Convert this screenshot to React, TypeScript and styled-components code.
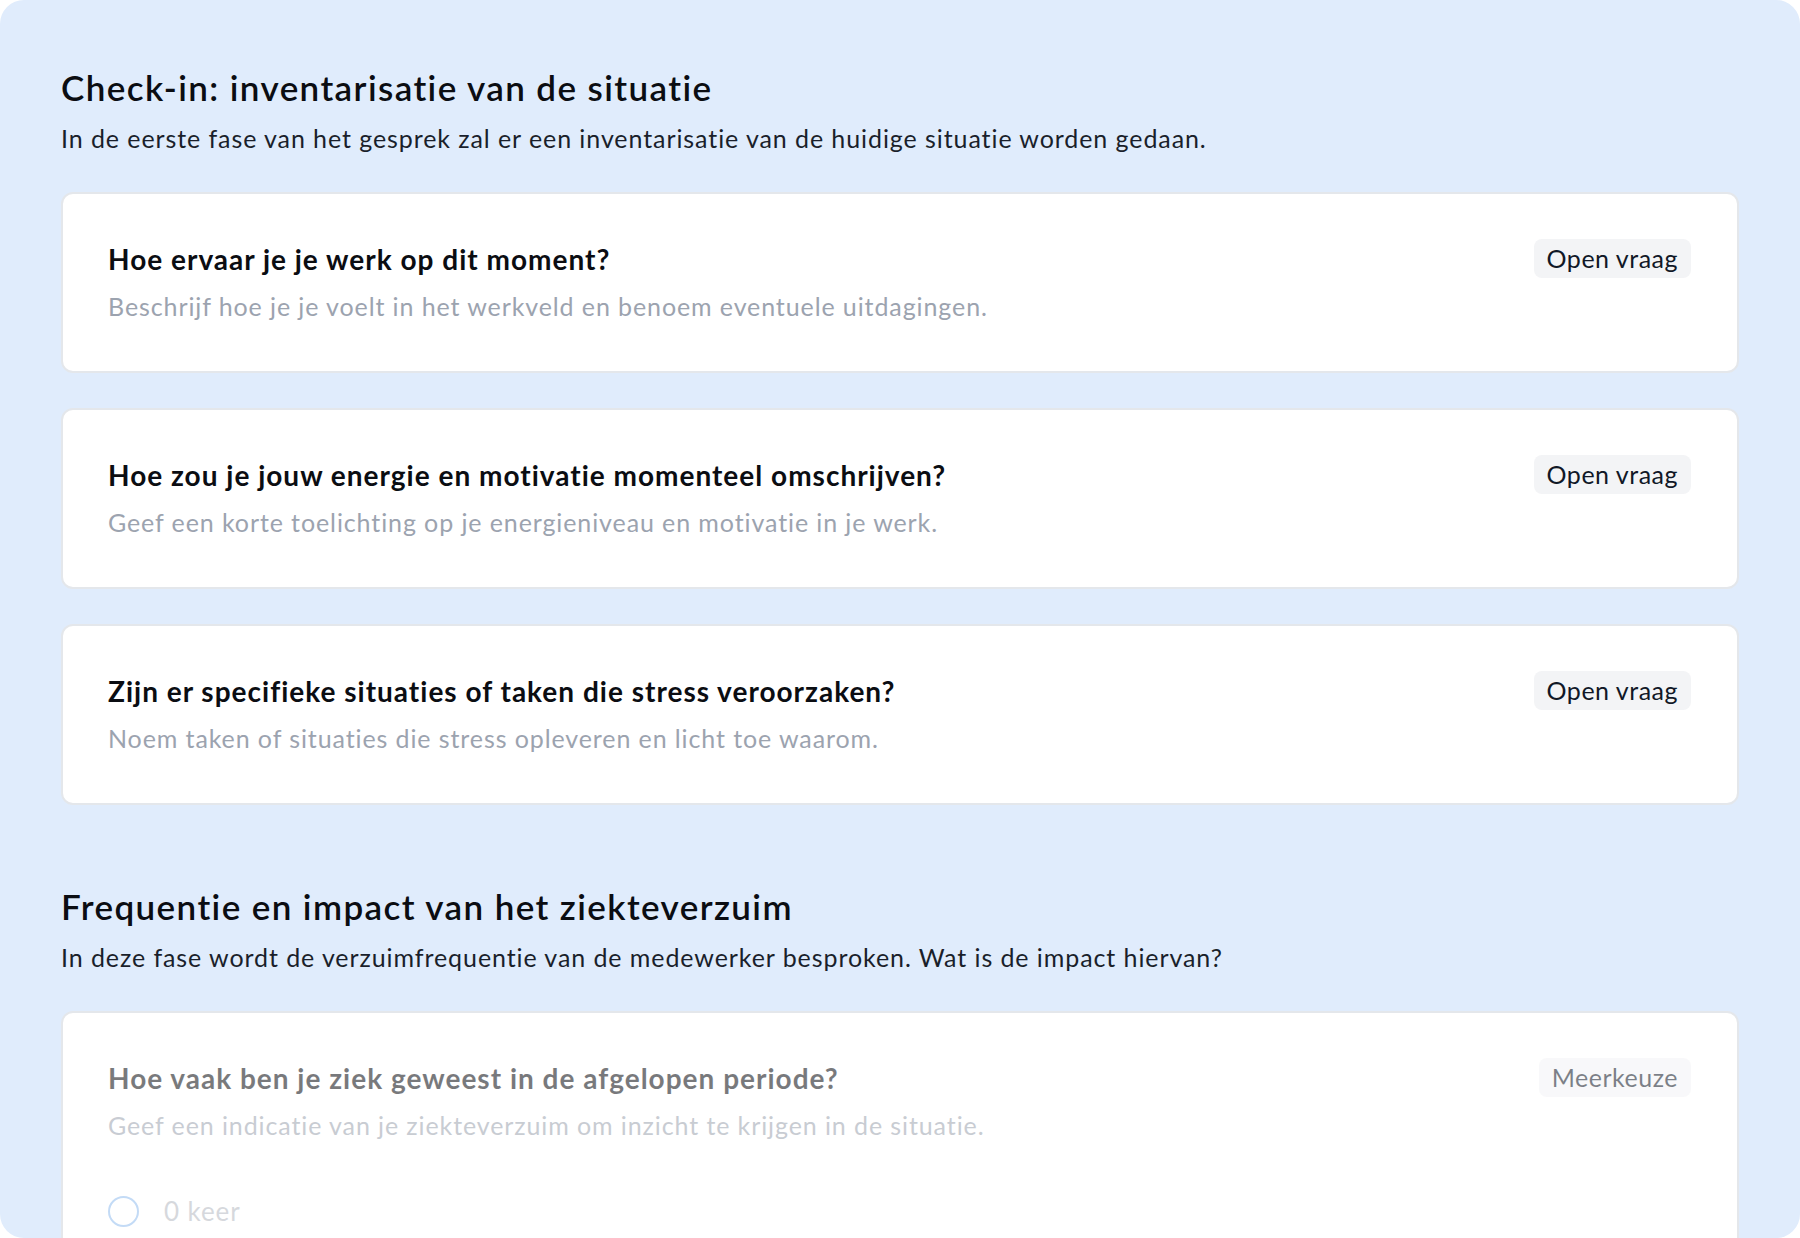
import React from 'react';
import styled, { createGlobalStyle } from 'styled-components';

const GlobalStyle = createGlobalStyle`
  html, body {
    margin: 0;
    padding: 0;
    background: #ffffff;
  }
  body {
    font-family: Lato, "Noto Sans", sans-serif;
    -webkit-font-smoothing: antialiased;
  }
`;

const Panel = styled.div`
  height: 1238px;
  box-sizing: border-box;
  background: #e0ecfc;
  border-radius: 24px;
  overflow: hidden;
  padding: 67px 61px 0;
  display: flex;
  flex-direction: column;
  gap: 81px;
`;

const Section = styled.section`
  display: flex;
  flex-direction: column;
`;

const Heading = styled.h2`
  margin: 0;
  font-size: 35px;
  line-height: 40px;
  font-weight: 600;
  letter-spacing: 1.4px;
  color: #0b0d12;
`;

const Intro = styled.p`
  margin: 15px 0 38px;
  font-size: 25px;
  line-height: 32px;
  font-weight: 400;
  letter-spacing: 0.92px;
  color: #1a1f2b;
`;

const CardList = styled.div`
  display: flex;
  flex-direction: column;
  gap: 35px;
`;

const Card = styled.div`
  background: #ffffff;
  border: 2px solid #e4e7eb;
  border-radius: 12px;
  padding: 45px 46px 49px 45px;
`;

const CardBody = styled.div<{ $dimmed?: boolean }>`
  opacity: ${(p) => (p.$dimmed ? 0.55 : 1)};
`;

const HeaderRow = styled.div`
  display: flex;
  align-items: center;
  justify-content: space-between;
  gap: 24px;
  min-height: 39px;
`;

const Question = styled.h3`
  margin: 0;
  font-size: 28px;
  line-height: 32px;
  font-weight: 700;
  letter-spacing: 1px;
  color: #0b0d12;
`;

const Badge = styled.span`
  flex-shrink: 0;
  background: #f3f4f6;
  color: #111827;
  border-radius: 8px;
  padding: 0 13px;
  height: 39px;
  line-height: 39px;
  font-size: 25px;
  letter-spacing: 0.5px;
  font-weight: 400;
`;

const Hint = styled.p`
  margin: 12px 0 0;
  font-size: 25px;
  line-height: 32px;
  letter-spacing: 0.9px;
  color: #9ca3af;
`;

const Options = styled.div`
  margin-top: 50px;
  display: flex;
  flex-direction: column;
  gap: 24px;
`;

const Option = styled.label`
  display: flex;
  align-items: center;
  gap: 25px;
  height: 40px;
  font-size: 26px;
  letter-spacing: 0.9px;
  color: #b4b9c1;
`;

const Radio = styled.span`
  width: 27px;
  height: 27px;
  border-radius: 50%;
  border: 2px solid #93bdee;
  background: #ffffff;
  box-sizing: content-box;
`;

type Q = { title: string; hint: string; kind: string; options?: string[] };

const sections: { title: string; intro: string; questions: Q[]; dimLast?: boolean }[] = [
  {
    title: 'Check-in: inventarisatie van de situatie',
    intro: 'In de eerste fase van het gesprek zal er een inventarisatie van de huidige situatie worden gedaan.',
    questions: [
      {
        title: 'Hoe ervaar je je werk op dit moment?',
        hint: 'Beschrijf hoe je je voelt in het werkveld en benoem eventuele uitdagingen.',
        kind: 'Open vraag',
      },
      {
        title: 'Hoe zou je jouw energie en motivatie momenteel omschrijven?',
        hint: 'Geef een korte toelichting op je energieniveau en motivatie in je werk.',
        kind: 'Open vraag',
      },
      {
        title: 'Zijn er specifieke situaties of taken die stress veroorzaken?',
        hint: 'Noem taken of situaties die stress opleveren en licht toe waarom.',
        kind: 'Open vraag',
      },
    ],
  },
  {
    title: 'Frequentie en impact van het ziekteverzuim',
    intro: 'In deze fase wordt de verzuimfrequentie van de medewerker besproken. Wat is de impact hiervan?',
    dimLast: true,
    questions: [
      {
        title: 'Hoe vaak ben je ziek geweest in de afgelopen periode?',
        hint: 'Geef een indicatie van je ziekteverzuim om inzicht te krijgen in de situatie.',
        kind: 'Meerkeuze',
        options: ['0 keer'],
      },
    ],
  },
];

const App = () => {
  return (
    <>
      <GlobalStyle />
      <Panel>
        {sections.map((s) => (
          <Section key={s.title}>
            <Heading>{s.title}</Heading>
            <Intro>{s.intro}</Intro>
            <CardList>
              {s.questions.map((q) => (
                <Card key={q.title}>
                  <CardBody $dimmed={s.dimLast}>
                    <HeaderRow>
                      <Question>{q.title}</Question>
                      <Badge>{q.kind}</Badge>
                    </HeaderRow>
                    <Hint>{q.hint}</Hint>
                    {q.options && (
                      <Options>
                        {q.options.map((o) => (
                          <Option key={o}>
                            <Radio />
                            {o}
                          </Option>
                        ))}
                      </Options>
                    )}
                  </CardBody>
                </Card>
              ))}
            </CardList>
          </Section>
        ))}
      </Panel>
    </>
  );
};

export default App;
